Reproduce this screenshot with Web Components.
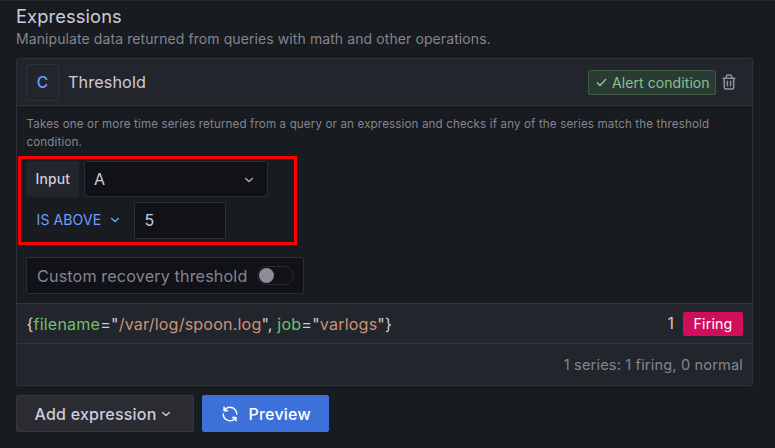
<!DOCTYPE html>
<html lang="en"><head><meta charset="utf-8"><title>Expressions</title>
<style>
html,body{margin:0;background:#181b1f}
body{width:775px;height:448px;overflow:hidden;font-family:Inter,"Liberation Sans",sans-serif}
</style></head><body>
<expressions-page></expressions-page>
<script>
const define=(name,html)=>{
  const t=document.createElement('template');t.innerHTML='<style>*{box-sizing:border-box}:host{box-sizing:border-box;white-space:nowrap}</style>'+html;
  customElements.define(name,class extends HTMLElement{constructor(){super();this.attachShadow({mode:'open'}).append(t.content.cloneNode(true))}});
};
define('chevron-icon',`<style>:host{display:block;width:10px;height:6px}svg{display:block}</style>
<svg width="10" height="6" viewBox="0 0 10 6" fill="none" stroke="currentColor" stroke-width="1.4" stroke-linecap="round" stroke-linejoin="round"><path d="M1.6 1.4 5 4.5 8.4 1.4"/></svg>`);
define('trash-icon',`<style>:host{display:block;width:14px;height:16px}svg{display:block}</style>
<svg width="14" height="16" viewBox="0 0 14 16" fill="none" stroke="currentColor" stroke-width="1.5" stroke-linecap="round" stroke-linejoin="round"><path d="M1.1 4.2H12.9M4.4 4V2.4Q4.4 1 5.8 1H8.2Q9.6 1 9.6 2.4V4M2.3 4.4V13.2Q2.3 15 4.1 15H9.9Q11.7 15 11.7 13.2V4.4M5.4 7.3V11.8M8.6 7.3V11.8"/></svg>`);
define('sync-icon',`<style>:host{display:block;width:18px;height:18px}svg{display:block}</style>
<svg width="18" height="18" viewBox="0 0 24 24" fill="currentColor"><path d="M19.91 15.51h-4.53a1 1 0 0 0 0 2h2.4A8 8 0 0 1 4 12a1 1 0 1 0-2 0 10 10 0 0 0 16.88 7.23V21a1 1 0 0 0 2 0v-4.5a1 1 0 0 0-.97-.99ZM12 2a10 10 0 0 0-6.88 2.77V3a1 1 0 0 0-2 0v4.5a1 1 0 0 0 1 1h4.5a1 1 0 0 0 0-2h-2.4A8 8 0 0 1 20 12a1 1 0 0 0 2 0A10 10 0 0 0 12 2Z"/></svg>`);
define('section-heading',`<style>:host{display:block}
.t{font-size:18.3px;letter-spacing:.12px;line-height:22px;color:#ccccdc}
.d{font-size:14px;letter-spacing:.09px;line-height:18px;margin-top:3px;color:#84858f}</style>
<div class="t"><slot name="title"></slot></div><div class="d"><slot></slot></div>`);
define('ref-id',`<style>:host{display:flex;align-items:center;justify-content:center;width:33px;height:37px;border:1px solid #2e3036;border-radius:2px;font-size:15.5px;font-weight:500;color:#6e9fff}</style><slot></slot>`);
define('alert-badge',`<style>:host{display:flex;align-items:center;width:128px;height:25px;padding-left:7px;border:1px solid #395d3e;border-radius:2px;background:#2b3a34;color:#86c48d;font-size:14px;letter-spacing:.08px}
svg{display:block;margin-right:5px}</style><svg width="11" height="9" viewBox="0 0 11 9" fill="none" stroke="currentColor" stroke-width="1.5" stroke-linecap="round" stroke-linejoin="round"><path d="M1.3 4.7 4 7.4 9.6 1.6"/></svg><slot></slot>`);
define('inline-label',`<style>:host{display:flex;align-items:center;width:53px;height:36px;padding:0 0 0 9.5px;border-radius:2px;background:#22252b;color:#ccccdc;font-size:13.9px;font-weight:500;letter-spacing:.15px}</style><slot></slot>`);
define('select-box',`<style>:host{display:flex;align-items:center;justify-content:space-between;width:184px;height:36px;padding:0 13px 0 9px;border:1px solid #2d2e34;border-radius:2px;background:#111217;color:#ccccdc;font-size:16px}chevron-icon{color:#a9a9b8;margin-top:1px}</style><slot></slot><chevron-icon></chevron-icon>`);
define('number-box',`<style>:host{display:flex;align-items:center;width:92px;height:37px;padding:0 0 1px 9.5px;border:1px solid #303137;border-radius:2px;background:#111217;color:#ccccdc;font-size:16px}</style><slot></slot>`);
define('operator-button',`<style>:host{display:flex;align-items:center;width:107px;height:37px;padding:0 0 2px 10.5px;color:#6e9fff;font-size:14px;letter-spacing:.12px}chevron-icon{margin-left:9px}</style><slot></slot><chevron-icon></chevron-icon>`);
define('recovery-toggle',`<style>:host{display:flex;align-items:center;justify-content:space-between;width:278px;height:37px;padding:0 9px 0 10px;border:1px solid #2d2e34;border-radius:2px;background:#111217;color:#84858f;font-size:16.2px;letter-spacing:.12px}
.s{display:flex;align-items:center;width:37px;height:19px;padding-left:1px;border:1px solid #292a30;border-radius:10px;background:#111217}.s i{width:15px;height:15px;border-radius:50%;background:#8d8c9a}</style><slot></slot><span class="s"><i></i></span>`);
define('focus-frame',`<style>:host{display:block;position:absolute;left:1px;top:97px;width:279px;height:89px;border:3px solid #fe0000}</style>`);
define('result-row',`<style>:host{display:flex;align-items:center;height:40px;padding:0 9px 0 9.5px;border-top:1px solid #34363d;background:#22252b;color:#ccccdc}
.q{font-size:16.1px;letter-spacing:.18px;flex:1}.k{color:#6cc26e}.v{color:#ce9178}.n{font-size:15.8px;margin-right:9px}
.f{display:flex;align-items:center;justify-content:center;width:60px;height:24px;background:#d10e5c;border-radius:2px;color:#fff;font-size:14.2px;letter-spacing:.15px}</style>
<span class="q">{<span class="k">filename</span>="<span class="v">/var/log/spoon.log</span>", <span class="k">job</span>="<span class="v">varlogs</span>"}</span><span class="n">1</span><span class="f">Firing</span>`);
define('card-footer',`<style>:host{display:flex;align-items:center;justify-content:flex-end;height:42px;padding-right:9px;border-top:1px solid #34363d;background:#22252b;color:#84858f;font-size:14.6px;letter-spacing:.15px}</style><slot></slot>`);
define('expression-card',`<style>:host{display:block;position:relative;width:737px;height:328px;border:1px solid #303239;border-radius:2px}
header{display:flex;align-items:center;height:47px;padding:0 16px 0 9px;background:#22252b;border-bottom:1px solid #303239;color:#84858f}
.name{flex:1;margin-left:9px;font-size:16.2px;letter-spacing:.12px;font-weight:400;color:#ccccdc}trash-icon{margin-left:6px;color:#91919e}
.body{height:197px;padding:9px 9px 0}
.desc{white-space:normal;height:37px;font-size:11.6px;letter-spacing:.135px;line-height:18px;padding-left:.5px;color:#84858f}
.r{display:flex;gap:5px}.r1{margin-top:9px}.r2{gap:1px;margin:5px 0 18px}</style>
<header><ref-id>C</ref-id><span class="name">Threshold</span><alert-badge>Alert condition</alert-badge><trash-icon></trash-icon></header>
<div class="body"><div class="desc">Takes one or more time series returned from a query or an expression and checks if any of the series match the threshold condition.</div>
<div class="r r1"><inline-label>Input</inline-label><select-box>A</select-box></div>
<div class="r r2"><operator-button>IS ABOVE</operator-button><number-box>5</number-box></div>
<recovery-toggle>Custom recovery threshold</recovery-toggle></div>
<result-row></result-row><card-footer>1 series: 1 firing, 0 normal</card-footer><focus-frame></focus-frame>`);
define('action-button',`<style>:host{display:flex;align-items:center;height:37px;border-radius:2px;font-size:16px;font-weight:500;letter-spacing:.22px;color:#ccccdc;background:#2b2c31;border:1px solid #37383e;width:178px;padding-left:17.5px;gap:4px}
:host([primary]){width:127px;background:#3d71d9;border-color:#3d71d9;color:#fff;padding-left:17.5px;gap:10px}</style><slot name="before"></slot><slot></slot><slot name="after"></slot>`);
define('expressions-page',`<style>:host{display:block;height:448px;border-top:1px solid #24272c;padding:4px 0 0 16px}
expression-card{margin-top:10px}.a{display:flex;gap:8px;margin-top:9px}</style>
<section-heading><span slot="title">Expressions</span>Manipulate data returned from queries with math and other operations.</section-heading>
<expression-card></expression-card>
<div class="a"><action-button>Add expression<chevron-icon slot="after"></chevron-icon></action-button><action-button primary><sync-icon slot="before"></sync-icon>Preview</action-button></div>`);
</script></body></html>
